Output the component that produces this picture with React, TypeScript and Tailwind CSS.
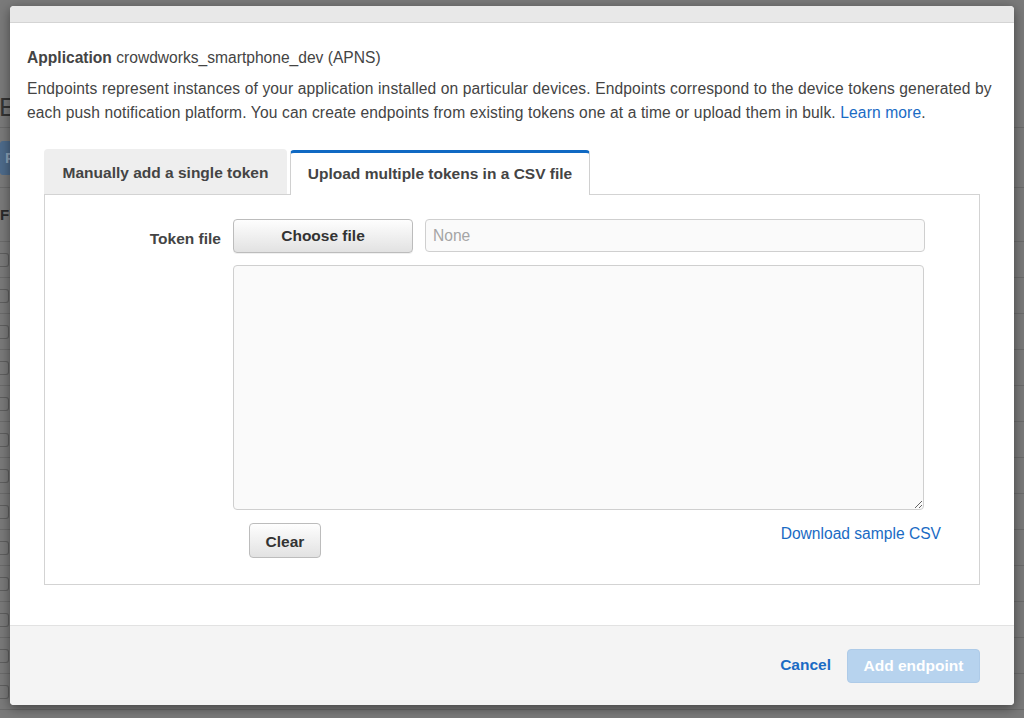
import React from "react";

const rows = Array.from({ length: 13 });

export default function App() {
  return (
    <div
      className="relative w-[1024px] h-[718px] overflow-hidden bg-[#7a7a7a]"
      style={{ fontFamily: '"Liberation Sans", Arial, Helvetica, sans-serif' }}
    >
      {/* dimmed background page */}
      <div className="flex flex-col">
        <div className="h-[128px] border-b border-[#6b6b6b] flex items-end pb-[5px]">
          <div className="text-[26px] leading-[30px] text-[#333] -ml-[1px]">Endpoints</div>
        </div>
        <div className="h-[60px] border-b border-[#6b6b6b] pt-[13px]">
          <div className="w-[160px] h-[34px] rounded-[3px] bg-[#4e6b8b] text-[#8ea4bb] text-[15px] font-bold leading-[34px] pl-[5px]">
            Publish endpoint
          </div>
        </div>
        <div className="h-[54px] border-b border-[#6b6b6b] flex items-center pt-[2px]">
          <div className="text-[15px] font-bold text-[#2a2a2a]">Filter</div>
        </div>
        {rows.map((_, i) => (
          <div key={i} className="h-[36px] border-b border-[#6b6b6b] flex items-center">
            <div className="w-[9px] h-[14px] rounded-r-[3px] border border-l-0 border-[#5f5f5f]" />
          </div>
        ))}
      </div>

      {/* modal */}
      <div className="absolute left-[10px] top-[6px] w-[1004px] h-[699px] bg-white rounded-[4px] overflow-hidden shadow-[0_3px_12px_rgba(0,0,0,0.45)] flex flex-col text-[#444]">
        <div className="h-[17px] shrink-0 bg-[#e8e8e8] border-b border-[#d4d4d4]" />
        <div className="flex-1 px-[17px] pt-[23px]">
          <p className="text-[15.6px] leading-[24px]">
            <span className="font-bold">Application</span> crowdworks_smartphone_dev (APNS)
          </p>
          <p className="mt-[7px] text-[15.6px] leading-[24px] tracking-[0.12px]">
            Endpoints represent instances of your application installed on particular devices. Endpoints correspond to the device tokens generated by each push notification platform. You can create endpoints from existing tokens one at a time or upload them in bulk.{" "}
            <a className="text-[#1a6bc4]">Learn more</a>.
          </p>

          <div className="mt-[24px] mx-[17px]">
            <div className="flex items-end gap-[3px] h-[45px] relative z-10">
              <div className="w-[243px] h-[45px] pt-[2px] bg-[#eeeeee] rounded-t-[4px] flex items-center justify-center text-[15.5px] font-bold text-[#444]">
                Manually add a single token
              </div>
              <div className="w-[300px] h-[45px] -mb-[1px] pb-[1px] bg-white rounded-t-[4px] border-t-[3px] border-t-[#1069c3] border-x border-x-[#d0d0d0] flex items-center justify-center text-[15.5px] font-bold text-[#444]">
                Upload multiple tokens in a CSV file
              </div>
            </div>
            <div className="h-[391px] border border-[#d3d3d3] pt-[24px]">
              <div className="flex">
                <div className="w-[176px] shrink-0 text-right pt-[8px] text-[15.5px] leading-[24px] font-bold text-[#444]">
                  Token file
                </div>
                <div className="ml-[12px] w-[692px]">
                  <div className="flex gap-[12px]">
                    <button className="w-[180px] h-[34px] rounded-[4px] border border-[#bcbcbc] bg-gradient-to-b from-[#fefefe] to-[#e2e2e2] text-[15.5px] font-bold text-[#333] shadow-[0_1px_0_rgba(0,0,0,0.06)]">
                      Choose file
                    </button>
                    <div className="flex-1 h-[33px] rounded-[4px] border border-[#cfcfcf] bg-[#fafafa] pl-[7px] text-[15.6px] leading-[31px] text-[#a5a5a5]">
                      None
                    </div>
                  </div>
                  <textarea className="mt-[12px] block w-[691px] h-[245px] rounded-[4px] border border-[#cfcfcf] bg-[#fafafa] outline-none" />
                  <div className="mt-[13px] ml-[16px] -mr-[16px] flex items-start justify-between">
                    <button className="w-[72px] h-[35px] pt-[2px] rounded-[4px] border border-[#bcbcbc] bg-gradient-to-b from-[#fefefe] to-[#e2e2e2] text-[15.5px] font-bold text-[#333]">
                      Clear
                    </button>
                    <a className="pt-[1px] text-[15.6px] leading-[20px] text-[#1a6bc4]">Download sample CSV</a>
                  </div>
                </div>
              </div>
            </div>
          </div>
        </div>
        <div className="h-[80px] shrink-0 bg-[#f4f4f4] border-t border-[#e2e2e2] flex items-start justify-end pt-[23px] pr-[34px]">
          <a className="h-[34px] leading-[31px] text-[15.5px] font-bold text-[#1a6bc4] mr-[16px]">Cancel</a>
          <button className="w-[133px] h-[34px] rounded-[4px] bg-[#b7d3ee] border border-[#aecbe8] text-[15.5px] font-bold text-white">
            Add endpoint
          </button>
        </div>
      </div>
    </div>
  );
}
